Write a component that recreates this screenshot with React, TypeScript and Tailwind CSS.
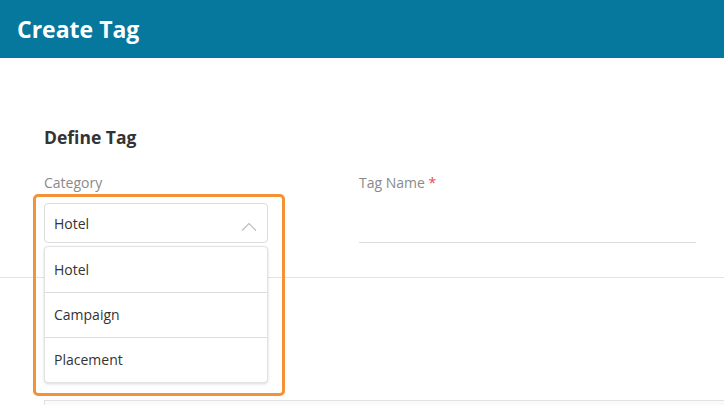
import React from 'react';

const options = ['Hotel', 'Campaign', 'Placement'];

export default function App() {
  return (
    <div className="relative h-[405px] w-full overflow-hidden bg-white font-['Open_Sans',sans-serif]">
      <header className="flex h-[58px] items-center bg-[#06779d] px-[17px]">
        <h1 className="text-[23px] font-bold text-white">Create Tag</h1>
      </header>

      <section className="h-[220px] border-b border-[#e4e4e4] pt-[67px] pl-[44px] pr-[28px]">
        <h2 className="text-[17.5px] leading-[24px] font-bold text-[#333]">Define Tag</h2>
        <div className="mt-[24px] flex gap-[91px]">
          <div className="relative w-[224px]">
            <label className="block text-[14px] leading-[20px] text-[#8a8a8a]">Category</label>
            <div className="mt-[10px] flex h-[40px] items-center justify-between rounded-[4px] border border-[#dcdcdc] pr-[10px] pl-[9px]">
              <span className="text-[14px] text-[#333]">Hotel</span>
              <svg width="16" height="9" viewBox="0 0 16 9" fill="none" className="mt-[6px]">
                <path d="M1 8.5 L8 1.5 L15 8.5" stroke="#bdbdbd" strokeWidth="1.2" />
              </svg>
            </div>
            <ul className="absolute top-[73px] left-0 z-10 w-[224px] rounded-[4px] border border-[#e2e2e2] bg-white shadow-[0_1px_3px_rgba(0,0,0,0.15)]">
              {options.map((o, i) => (
                <li
                  key={o}
                  className={`flex h-[45px] items-center pl-[9px] text-[14px] text-[#333] ${i > 0 ? 'border-t border-[#dcdcdc] pb-[2px]' : 'pb-[1px]'}`}
                >
                  {o}
                </li>
              ))}
            </ul>
          </div>
          <div className="flex-1">
            <label className="block text-[14px] leading-[20px] text-[#8a8a8a]">
              Tag Name <span className="text-[#e74c4c]">*</span>
            </label>
            <div className="mt-[10px] h-[40px] border-b border-[#dcdcdc]" />
          </div>
        </div>
      </section>

      <div className="mt-[122px] ml-[44px] h-[20px] border-t border-l border-[#e2e2e2] bg-[#fafafa]" />

      <div className="pointer-events-none absolute top-[194px] left-[33px] z-20 h-[202px] w-[252px] rounded-[5px] border-[3px] border-[#f39237]" />
    </div>
  );
}
